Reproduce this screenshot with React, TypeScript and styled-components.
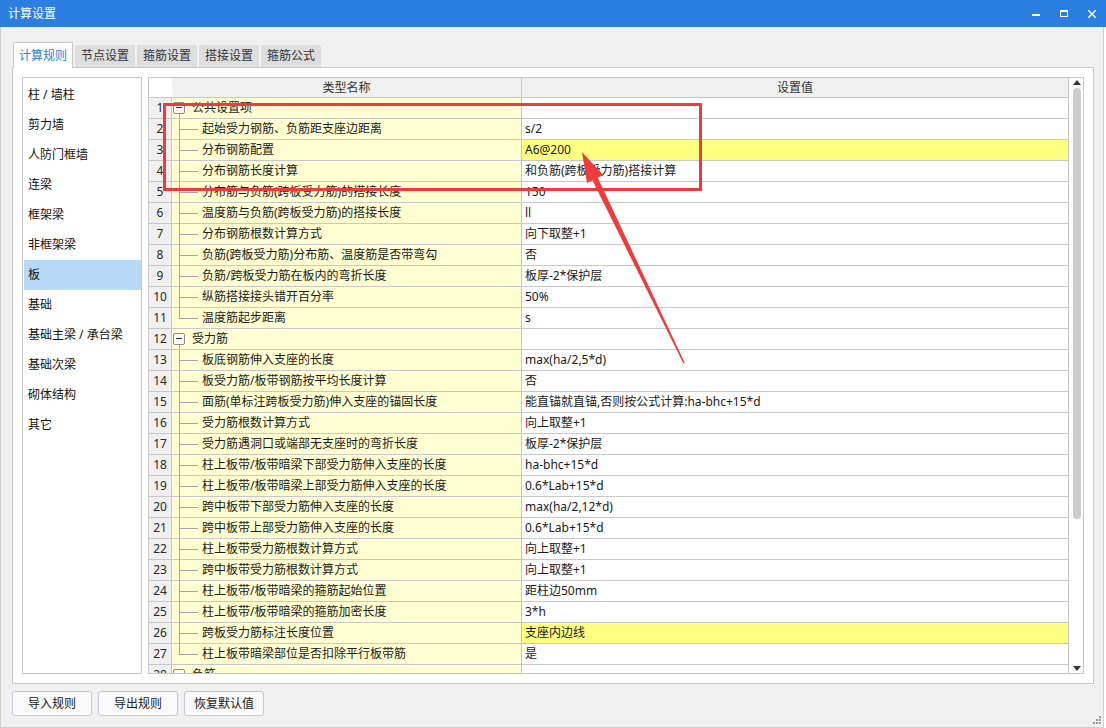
import React from 'react';
import styled, { createGlobalStyle } from 'styled-components';

const FONT = `"Noto Sans", "Noto Sans CJK SC", sans-serif`;

const Global = createGlobalStyle`
  html, body { margin: 0; padding: 0; background: #ffffff; }
  body { font-family: ${FONT}; font-size: 12px; color: #1e1e1e; }
  * { box-sizing: border-box; }
`;

const Window = styled.div`
  position: relative;
  width: 1106px;
  height: 728px;
  display: flex;
  flex-direction: column;
  overflow: hidden;
`;

const TitleBar = styled.div`
  height: 27px;
  flex: none;
  background: #2b7fe0;
  display: flex;
  align-items: flex-start;
  padding: 0 2px 0 8px;
  color: #ffffff;
  font-size: 12px;
`;

const Title = styled.div`
  flex: 1;
  line-height: 27px;
`;

const Controls = styled.div`
  display: flex;
  gap: 4px;
`;

const CtrlBtn = styled.div`
  width: 24px;
  height: 27px;
  display: flex;
  justify-content: center;
  padding-top: 9px;
`;

const Body = styled.div`
  position: relative;
  width: 1104px;
  flex: 1;
  background: #f0f0f0;
  border: 1px solid #cfcfcf;
  border-top: none;
  padding: 15px 9px 0 11px;
  display: flex;
  flex-direction: column;
`;

const TabStrip = styled.div`
  height: 25px;
  display: flex;
  align-items: flex-end;
  gap: 2px;
  padding-left: 1px;
`;

const Tab = styled.div<{ $active?: boolean }>`
  position: relative;
  z-index: 2;
  width: 60px;
  text-align: center;
  font-size: 12px;
  line-height: 22px;
  border-radius: 2px 2px 0 0;
  ${(p) =>
    p.$active
      ? `height: 26px; margin-bottom: -1px; padding-top: 2px; background: #ffffff; color: #2b7fe0;
         border: 1px solid #c8c8c8; border-bottom: none;`
      : `height: 22px; background: #dedede; color: #333333;`}
`;

const Panel = styled.div`
  position: relative;
  z-index: 1;
  height: 617px;
  flex: none;
  background: #ffffff;
  border: 1px solid #c9c9c9;
  padding: 9px;
  display: flex;
  gap: 6px;
`;

const List = styled.div`
  width: 120px;
  flex: none;
  border: 1px solid #c8c8c8;
  padding: 2px 0 0 1px;
  display: flex;
  flex-direction: column;
`;

const ListItem = styled.div<{ $selected?: boolean }>`
  height: 30px;
  line-height: 30px;
  padding-left: 4px;
  font-size: 12px;
  color: #111111;
  white-space: nowrap;
  background: ${(p) => (p.$selected ? '#b7dbf6' : 'transparent')};
`;

const Grid = styled.div`
  flex: 1;
  border: 1px solid #c8c8c8;
  display: flex;
  overflow: hidden;
`;

const TableArea = styled.div`
  width: 920px;
  flex: none;
  display: flex;
  flex-direction: column;
  overflow: hidden;
`;

const COLS = '23px 350px 547px';

const HeaderRow = styled.div`
  display: grid;
  grid-template-columns: ${COLS};
  height: 20px;
  flex: none;
  border-bottom: 1px solid #c8c8c8;
`;

const HeaderCell = styled.div<{ $blank?: boolean }>`
  text-align: center;
  line-height: 19px;
  font-size: 12px;
  color: #333333;
  background: ${(p) => (p.$blank ? '#ffffff' : '#f0f0f0')};
  border-right: ${(p) => (p.$blank ? 'none' : '1px solid #c8c8c8')};
`;

const Row = styled.div`
  display: grid;
  grid-template-columns: ${COLS};
  height: 21px;
  flex: none;
`;

const Cell = styled.div`
  height: 21px;
  border-right: 1px solid #c8c8c8;
  border-bottom: 1px solid #c8c8c8;
  line-height: 20px;
  font-size: 12px;
  white-space: nowrap;
  overflow: hidden;
`;

const NumCell = styled(Cell)`
  background: #f0f0f0;
  text-align: center;
  color: #2a2a2a;
`;

const NameCell = styled(Cell)`
  background: #ffffd2;
  display: flex;
  align-items: flex-start;
  padding-left: 1px;
  overflow: visible;
  color: #1a1a1a;
`;

const ValueCell = styled(Cell)<{ $hl?: boolean }>`
  background: ${(p) => (p.$hl ? '#ffff80' : '#ffffff')};
  padding-left: 3px;
  color: #1a1a1a;
`;

const Toggle = styled.div<{ $stem?: boolean }>`
  position: relative;
  width: 12px;
  height: 12px;
  flex: none;
  margin-top: 4px;
  margin-right: 7px;
  border: 1px solid #8c8c8c;
  border-radius: 2px;
  background: #fafafa;
  &::before {
    content: '';
    position: absolute;
    left: 2px;
    top: 4px;
    width: 6px;
    height: 1px;
    background: #333333;
  }
  &::after {
    content: '';
    display: ${(p) => (p.$stem ? 'block' : 'none')};
    position: absolute;
    left: 5px;
    top: calc(100% + 1px);
    width: 1px;
    height: 4px;
    background: #a6a6a6;
  }
`;

const Guide = styled.div<{ $last?: boolean }>`
  position: relative;
  width: 29px;
  height: 20px;
  flex: none;
  &::before {
    content: '';
    position: absolute;
    left: 6px;
    top: 0;
    width: 1px;
    height: ${(p) => (p.$last ? '11px' : '21px')};
    background: #a6a6a6;
  }
  &::after {
    content: '';
    position: absolute;
    left: 7px;
    top: 10px;
    width: 18px;
    height: 1px;
    background: #a6a6a6;
  }
`;

const Scrollbar = styled.div`
  width: 14px;
  flex: none;
  background: #ffffff;
  display: flex;
  flex-direction: column;
  align-items: center;
  padding: 2px 0 2px 1px;
`;

const ArrowUp = styled.div`
  width: 0;
  height: 0;
  flex: none;
  border-left: 4px solid transparent;
  border-right: 4px solid transparent;
  border-bottom: 5px solid #333333;
`;

const ArrowDown = styled(ArrowUp)`
  border-bottom: none;
  border-top: 5px solid #333333;
`;

const Thumb = styled.div`
  width: 8px;
  height: 431px;
  flex: none;
  margin-top: 3px;
  border-radius: 4px;
  background: #cdcdcd;
`;

const Spacer = styled.div`
  flex: 1;
`;

const ButtonRow = styled.div`
  display: flex;
  gap: 6px;
  margin-top: 7px;
`;

const Button = styled.button`
  width: 80px;
  height: 25px;
  border: 1px solid #c5c9d6;
  border-radius: 3px;
  background: #f9f9f9;
  font-family: ${FONT};
  font-size: 12px;
  color: #222222;
  padding: 0;
  line-height: 23px;
`;

const Grip = styled.svg`
  position: absolute;
  right: 1px;
  bottom: 2px;
`;

const Overlay = styled.svg`
  position: absolute;
  left: 0;
  top: 0;
  pointer-events: none;
  z-index: 10;
`;

type RowData = {
  n: number;
  group?: boolean;
  name: string;
  value?: string;
  hl?: boolean;
  last?: boolean;
};

const rows: RowData[] = [
  { n: 1, group: true, name: '公共设置项' },
  { n: 2, name: '起始受力钢筋、负筋距支座边距离', value: 's/2' },
  { n: 3, name: '分布钢筋配置', value: 'A6@200', hl: true },
  { n: 4, name: '分布钢筋长度计算', value: '和负筋(跨板受力筋)搭接计算' },
  { n: 5, name: '分布筋与负筋(跨板受力筋)的搭接长度', value: '150' },
  { n: 6, name: '温度筋与负筋(跨板受力筋)的搭接长度', value: 'll' },
  { n: 7, name: '分布钢筋根数计算方式', value: '向下取整+1' },
  { n: 8, name: '负筋(跨板受力筋)分布筋、温度筋是否带弯勾', value: '否' },
  { n: 9, name: '负筋/跨板受力筋在板内的弯折长度', value: '板厚-2*保护层' },
  { n: 10, name: '纵筋搭接接头错开百分率', value: '50%' },
  { n: 11, name: '温度筋起步距离', value: 's', last: true },
  { n: 12, group: true, name: '受力筋' },
  { n: 13, name: '板底钢筋伸入支座的长度', value: 'max(ha/2,5*d)' },
  { n: 14, name: '板受力筋/板带钢筋按平均长度计算', value: '否' },
  { n: 15, name: '面筋(单标注跨板受力筋)伸入支座的锚固长度', value: '能直锚就直锚,否则按公式计算:ha-bhc+15*d' },
  { n: 16, name: '受力筋根数计算方式', value: '向上取整+1' },
  { n: 17, name: '受力筋遇洞口或端部无支座时的弯折长度', value: '板厚-2*保护层' },
  { n: 18, name: '柱上板带/板带暗梁下部受力筋伸入支座的长度', value: 'ha-bhc+15*d' },
  { n: 19, name: '柱上板带/板带暗梁上部受力筋伸入支座的长度', value: '0.6*Lab+15*d' },
  { n: 20, name: '跨中板带下部受力筋伸入支座的长度', value: 'max(ha/2,12*d)' },
  { n: 21, name: '跨中板带上部受力筋伸入支座的长度', value: '0.6*Lab+15*d' },
  { n: 22, name: '柱上板带受力筋根数计算方式', value: '向上取整+1' },
  { n: 23, name: '跨中板带受力筋根数计算方式', value: '向上取整+1' },
  { n: 24, name: '柱上板带/板带暗梁的箍筋起始位置', value: '距柱边50mm' },
  { n: 25, name: '柱上板带/板带暗梁的箍筋加密长度', value: '3*h' },
  { n: 26, name: '跨板受力筋标注长度位置', value: '支座内边线', hl: true },
  { n: 27, name: '柱上板带暗梁部位是否扣除平行板带筋', value: '是', last: true },
  { n: 28, group: true, name: '负筋' },
];

const listItems = [
  '柱 / 墙柱',
  '剪力墙',
  '人防门框墙',
  '连梁',
  '框架梁',
  '非框架梁',
  '板',
  '基础',
  '基础主梁 / 承台梁',
  '基础次梁',
  '砌体结构',
  '其它',
];

const tabs = ['计算规则', '节点设置', '箍筋设置', '搭接设置', '箍筋公式'];

export default function App() {
  return (
    <>
      <Global />
      <Window>
        <TitleBar>
          <Title>计算设置</Title>
          <Controls>
            <CtrlBtn>
              <svg width="10" height="10" viewBox="0 0 10 10">
                <rect x="1" y="5" width="8" height="2" fill="#ffffff" />
              </svg>
            </CtrlBtn>
            <CtrlBtn>
              <svg width="10" height="10" viewBox="0 0 10 10">
                <rect x="1.5" y="1.5" width="7" height="6" fill="none" stroke="#ffffff" strokeWidth="1" />
                <rect x="1" y="1" width="8" height="2" fill="#ffffff" />
              </svg>
            </CtrlBtn>
            <CtrlBtn>
              <svg width="10" height="10" viewBox="0 0 10 10">
                <path d="M1.3 1.3 L8.7 8.7 M8.7 1.3 L1.3 8.7" stroke="#ffffff" strokeWidth="1.4" />
              </svg>
            </CtrlBtn>
          </Controls>
        </TitleBar>
        <Body>
          <TabStrip>
            {tabs.map((t, i) => (
              <Tab key={t} $active={i === 0}>
                {t}
              </Tab>
            ))}
          </TabStrip>
          <Panel>
            <List>
              {listItems.map((t) => (
                <ListItem key={t} $selected={t === '板'}>
                  {t}
                </ListItem>
              ))}
            </List>
            <Grid>
              <TableArea>
                <HeaderRow>
                  <HeaderCell $blank />
                  <HeaderCell>类型名称</HeaderCell>
                  <HeaderCell>设置值</HeaderCell>
                </HeaderRow>
                {rows.map((r) => (
                  <Row key={r.n}>
                    <NumCell>{r.n}</NumCell>
                    <NameCell>
                      {r.group ? <Toggle $stem /> : <Guide $last={r.last} />}
                      {r.name}
                    </NameCell>
                    <ValueCell $hl={r.hl}>{r.value ?? ''}</ValueCell>
                  </Row>
                ))}
              </TableArea>
              <Scrollbar>
                <ArrowUp />
                <Thumb />
                <Spacer />
                <ArrowDown />
              </Scrollbar>
            </Grid>
          </Panel>
          <ButtonRow>
            <Button>导入规则</Button>
            <Button>导出规则</Button>
            <Button>恢复默认值</Button>
          </ButtonRow>
          <Grip width="9" height="9" viewBox="0 0 9 9">
            <rect x="6" y="0" width="2" height="2" fill="#9a9a9a" />
            <rect x="3" y="3" width="2" height="2" fill="#9a9a9a" />
            <rect x="6" y="3" width="2" height="2" fill="#9a9a9a" />
            <rect x="0" y="6" width="2" height="2" fill="#9a9a9a" />
            <rect x="3" y="6" width="2" height="2" fill="#9a9a9a" />
            <rect x="6" y="6" width="2" height="2" fill="#9a9a9a" />
          </Grip>
        </Body>
        <Overlay width="1106" height="728" viewBox="0 0 1106 728">
          <rect x="164.5" y="104.5" width="536" height="85" fill="none" stroke="#ef3b3b" strokeWidth="3" />
          <polygon
            points="582,152 603.2,175.1 597.8,177.7 684.7,362.7 683.3,363.3 592.4,180.3 587,182.9"
            fill="#ef3b3b"
          />
        </Overlay>
      </Window>
    </>
  );
}
